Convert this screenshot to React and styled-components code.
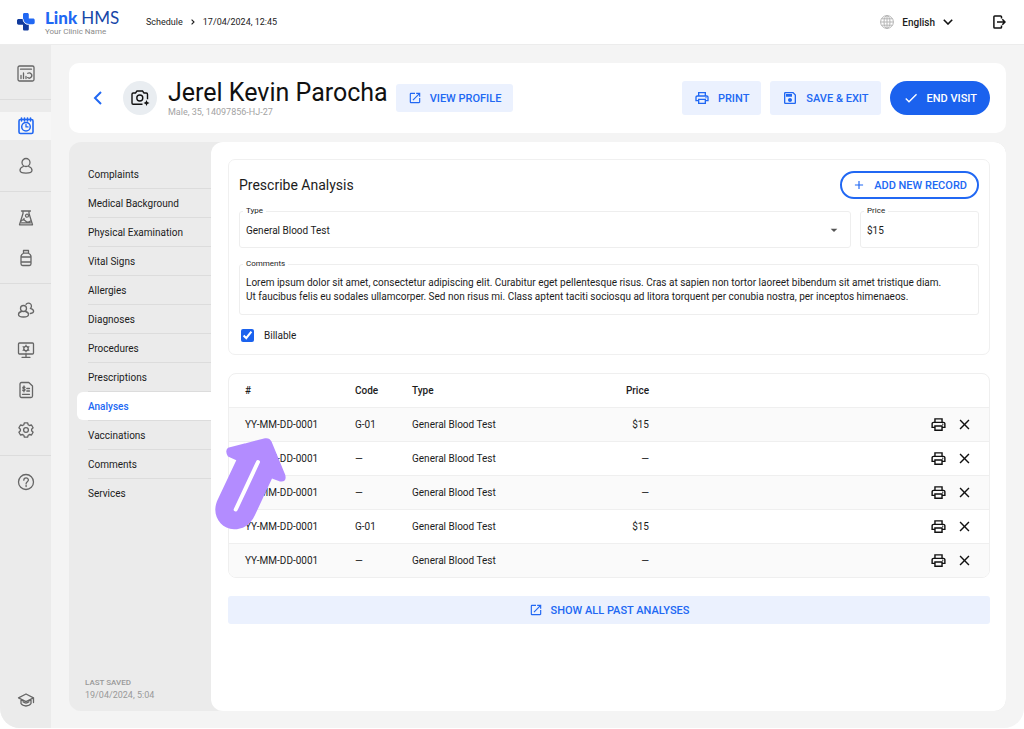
import React, { useState } from "react";
import styled, { createGlobalStyle } from "styled-components";
import { MdOutlinePrint, MdOpenInNew, MdOutlineSave, MdCheck, MdAdd, MdClose, MdArrowDropDown } from "react-icons/md";

const GlobalStyle = createGlobalStyle`
  * {
    box-sizing: border-box;
  }
  body {
    margin: 0;
    background: #fff;
    color: #1c1c1c;
    font-family: Roboto, "Liberation Sans", sans-serif;
    font-size: 10px;
  }
  button, input, select, textarea {
    font: inherit;
    color: inherit;
  }
  button {
    cursor: pointer;
  }
`;

const sections = [
  "Complaints",
  "Medical Background",
  "Physical Examination",
  "Vital Signs",
  "Allergies",
  "Diagnoses",
  "Procedures",
  "Prescriptions",
  "Analyses",
  "Vaccinations",
  "Comments",
  "Services",
];

const records = [
  { id: 1, number: "YY-MM-DD-0001", code: "G-01", type: "General Blood Test", price: "$15" },
  { id: 2, number: "YY-MM-DD-0001", code: "—", type: "General Blood Test", price: "—" },
  { id: 3, number: "YY-MM-DD-0001", code: "—", type: "General Blood Test", price: "—" },
  { id: 4, number: "YY-MM-DD-0001", code: "G-01", type: "General Blood Test", price: "$15" },
  { id: 5, number: "YY-MM-DD-0001", code: "—", type: "General Blood Test", price: "—" },
];

const defaultComment =
  "Lorem ipsum dolor sit amet, consectetur adipiscing elit. Curabitur eget pellentesque risus. Cras at sapien non tortor laoreet bibendum sit amet tristique diam.\nUt faucibus felis eu sodales ullamcorper. Sed non risus mi. Class aptent taciti sociosqu ad litora torquent per conubia nostra, per inceptos himenaeos.";

const icons = {
  dashboard: (
    <>
      <rect x="1" y="1" width="16" height="15" rx="1.5" />
      <path d="M3.5 4.2h11M4 13.5v-3M6.5 13.5V8M9 13.5v-2M10.8 8.300a2.600 2.600 0 1 1-.2 4.300" />
    </>
  ),
  schedule: (
    <>
      <rect x="2" y="2.5" width="14" height="14" rx="1.5" strokeWidth="1.6" />
      <path d="M4.5 1v3M7.5 1v3M10.5 1v3M13.5 1v3" strokeWidth="1.6" />
      <circle cx="9" cy="9.7" r="4.3" strokeWidth="1.5" />
      <path d="M9 7.3v2.6h2" />
    </>
  ),
  patient: (
    <>
      <circle cx="9" cy="5.5" r="4" />
      <path d="M6.300 9.500C4.200 10.300 3 11.800 3 13.300c0 1.900 2.600 2.900 6 2.900s6-1 6-2.900c0-1.500-1.200-3-3.300-3.800" />
    </>
  ),
  lab: (
    <>
      <path d="M4.500 2h9M6 2.200v2.300L2.500 15.800h13L12 4.500V2.200" />
      <circle cx="10" cy="6.700" r="1.500" />
      <path d="M4 12c1.500-1.600 3-1.600 4.500 0s3.500 1.200 5 0M7 9.300v1.500M4.200 13.800h9.500" />
    </>
  ),
  bottle: (
    <>
      <path d="M6.500 1.500h5v2.700h-5zM6.500 4.200C4.800 5.200 4 6 4 7.500v7.300c0 1 .6 1.700 1.600 1.700h6.800c1 0 1.600-.7 1.600-1.700V7.500c0-1.500-.8-2.300-2.500-3.300M4 8h10M4 13h10" />
    </>
  ),
  people: (
    <>
      <circle cx="6.500" cy="7.500" r="3" />
      <path d="M4.500 10.500C2.500 11 1.500 12 1.500 13.500c0 1.500 2 2.500 5 2.500s5-1 5-2.500c0-1.500-1-2.500-3-3M9 3.300a3 3 0 1 1 4.300 4.100c2.200.6 3.300 1.500 3.300 2.900 0 1.200-1.300 2-3.300 2.200" />
    </>
  ),
  monitor: (
    <>
      <rect x="1.500" y="2" width="15" height="11" rx="1" />
      <circle cx="9" cy="7.500" r="2.200" />
      <path d="M9 4.200v1M9 9.800v1M6.100 5.800l.9.500M11 8.700l.9.500M6.100 9.200l.9-.5M11 6.300l.9-.5M9 13v3M5 16.300h8" />
    </>
  ),
  invoice: (
    <>
      <path d="M4.500 1.500h7.300L15.500 5v10c0 .8-.7 1.500-1.500 1.500H4.500C3.700 16.500 3 15.800 3 15V3c0-.8.7-1.500 1.500-1.500z" />
      <path d="M8 6.300c-.4-.7-2.200-.7-2.200.4 0 1.300 2.300.8 2.300 2.100 0 1.100-1.900 1.200-2.400.3M7 5v5.800M9.800 7.500h2.700M9.800 10h2.700M5.500 13.300h7" />
    </>
  ),
  settings: (
    <>
      <path d="M7.400 1.800h3.200l.6 2 1.200.7 2.100-.5 1.600 2.800L14.600 8.300v1.400l1.500 1.500-1.600 2.800-2.100-.5-1.200.7-.6 2H7.400l-.6-2-1.200-.7-2.100.5-1.600-2.800 1.500-1.500V8.300L1.900 6.800 3.500 4l2.100.5 1.200-.7z" />
      <circle cx="9" cy="9" r="2.400" />
    </>
  ),
  help: (
    <>
      <circle cx="9" cy="9" r="7.500" />
      <path d="M6.800 7.200c0-3 4.600-2.900 4.600-.2 0 1.700-2.300 1.700-2.300 3.700M9.100 12.200v1.300" />
    </>
  ),
  academy: (
    <>
      <path d="M1.500 6.800L9 3l7.500 3.800L9 10.600zM4 8.300v4.200C6 15.800 12 15.800 14 12.500V8.300M16.500 6.800v4.700M6 10.800c2 1.700 4 1.700 6 0" />
    </>
  ),
};

const railItems = [
  { name: "dashboard", label: "Dashboard" },
  { divider: true },
  { name: "schedule", label: "Schedule", active: true },
  { name: "patient", label: "Patients" },
  { divider: true },
  { name: "lab", label: "Laboratory" },
  { name: "bottle", label: "Pharmacy" },
  { divider: true },
  { name: "people", label: "Staff" },
  { name: "monitor", label: "Equipment" },
  { name: "invoice", label: "Invoices" },
  { name: "settings", label: "Settings" },
  { divider: true },
  { name: "help", label: "Help" },
];

function RailIcon({ name }) {
  return (
    <svg width="18" height="18" viewBox="0 0 18 18" fill="none" stroke="currentColor" strokeWidth="1.3" strokeLinecap="round" strokeLinejoin="round">
      {icons[name]}
    </svg>
  );
}

function LogoMark() {
  return (
    <svg width="18" height="18" viewBox="0 0 18 18">
      <path d="M7.500 0h2.700c1 0 1.600.6 1.600 1.600V5.600H16c1 0 1.700.6 1.700 1.600v2.400c0 1-.7 1.700-1.700 1.700h-4.200C8.500 11.300 6 9 6 5.800V1.600C6 .6 6.500 0 7.500 0z" fill="#2168f3" />
      <path d="M1.700 6h4.200c.3 3.300 2.500 5.500 5.900 5.600V16c0 1-.6 1.600-1.600 1.600H7.500c-1 0-1.500-.6-1.500-1.600v-4.300H1.700C.7 11.700 0 11.100 0 10.100V7.600C0 6.600.7 6 1.700 6z" fill="#103a9c" />
      <path d="M6 5.800C6 9 8.500 11.400 11.800 11.400" fill="none" stroke="#fff" strokeWidth=".8" />
    </svg>
  );
}

function Header() {
  return (
    <TopBar>
      <Brand href="#home">
        <LogoMark />
        <BrandText>
          <BrandName>
            Link<span>HMS</span>
          </BrandName>
          <BrandSub>Your Clinic Name</BrandSub>
        </BrandText>
      </Brand>
      <Crumbs aria-label="Breadcrumb">
        <a href="#schedule">Schedule</a>
        <svg width="4" height="6" viewBox="0 0 4 6" fill="none" stroke="#1c1c1c" strokeWidth="1.100">
          <path d="M.6.6L3 3 .6 5.400" />
        </svg>
        <span>17/04/2024, 12:45</span>
      </Crumbs>
      <Language>
        <svg width="14" height="14" viewBox="0 0 14 14" fill="none" stroke="#b5b5b5" strokeWidth="1">
          <circle cx="7" cy="7" r="6.400" />
          <ellipse cx="7" cy="7" rx="3" ry="6.400" />
          <path d="M7 .6v12.800M.6 7h12.800M1.500 3.800h11M1.500 10.200h11" />
        </svg>
        English
        <svg width="10" height="6" viewBox="0 0 10 6" fill="none" stroke="#111" strokeWidth="1.600">
          <path d="M.8.8L5 5 9.200.8" />
        </svg>
      </Language>
      <LogoutButton aria-label="Log out">
        <svg width="13" height="14" viewBox="0 0 13 14" fill="none" stroke="#111" strokeWidth="1.500">
          <path d="M8.500 3.500V1.800c0-.6-.3-.9-.9-.9H1.800c-.6 0-.9.3-.9.9v10.400c0 .6.300.9.9.9h5.800c.6 0 .9-.3.9-.9v-1.700M4 7h8M9.300 4.200L12 7 9.300 9.800" />
        </svg>
      </LogoutButton>
    </TopBar>
  );
}

function PatientHeader() {
  return (
    <PatientCard>
      <BackButton aria-label="Back">
        <svg width="10" height="14" viewBox="0 0 10 14" fill="none" stroke="#2168f3" strokeWidth="2">
          <path d="M8 1L2 7l6 6" />
        </svg>
      </BackButton>
      <Avatar aria-label="Add photo">
        <svg width="20" height="18" viewBox="0 0 20 18" fill="none" stroke="#111" strokeWidth="1.400">
          <path d="M12.500 15.300H3.200c-.8 0-1.200-.4-1.200-1.200V5.200C2 4.400 2.400 4 3.200 4h2.300l1.500-2h5.500L14 4h2.300c.8 0 1.200.4 1.200 1.200v5" />
          <circle cx="9.800" cy="9" r="3" />
          <path d="M16.500 11l.9 2.100 2.100.9-2.100.9-.9 2.100-.9-2.100-2.100-.9 2.100-.9z" fill="#111" stroke="none" />
        </svg>
      </Avatar>
      <PatientInfo>
        <PatientName>Jerel Kevin Parocha</PatientName>
        <PatientMeta>Male, 35, 14097856-HJ-27</PatientMeta>
      </PatientInfo>
      <SoftButton>
        <MdOpenInNew size={14} />
        VIEW PROFILE
      </SoftButton>
      <Actions>
        <SoftButton $tall>
          <MdOutlinePrint size={16} />
          PRINT
        </SoftButton>
        <SoftButton $tall>
          <MdOutlineSave size={16} />
          SAVE &amp; EXIT
        </SoftButton>
        <PrimaryButton>
          <MdCheck size={16} />
          END VISIT
        </PrimaryButton>
      </Actions>
    </PatientCard>
  );
}

function AnalysisForm() {
  const [type, setType] = useState("General Blood Test");
  const [price, setPrice] = useState("$15");
  const [comment, setComment] = useState(defaultComment);
  const [billable, setBillable] = useState(true);

  return (
    <FormCard>
      <FormHead>
        <FormTitle>Prescribe Analysis</FormTitle>
        <OutlineButton type="button">
          <MdAdd size={14} />
          ADD NEW RECORD
        </OutlineButton>
      </FormHead>
      <FieldRow>
        <Field>
          <legend><label htmlFor="type">Type</label></legend>
          <SelectWrap>
            <select id="type" value={type} onChange={(e) => setType(e.target.value)}>
              <option>General Blood Test</option>
              <option>Urine Test</option>
            </select>
            <MdArrowDropDown size={16} />
          </SelectWrap>
        </Field>
        <Field $narrow>
          <legend><label htmlFor="price">Price</label></legend>
          <TextInput id="price" value={price} onChange={(e) => setPrice(e.target.value)} />
        </Field>
      </FieldRow>
      <Field>
        <legend><label htmlFor="comments">Comments</label></legend>
        <TextArea id="comments" rows={2} value={comment} onChange={(e) => setComment(e.target.value)} />
      </Field>
      <CheckLabel>
        <Checkbox type="checkbox" checked={billable} onChange={(e) => setBillable(e.target.checked)} />
        Billable
      </CheckLabel>
    </FormCard>
  );
}

function RecordsTable() {
  return (
    <TableCard>
      <Table>
        <colgroup>
          <Col $width={126} />
          <Col $width={57} />
          <Col $width={180} />
          <Col $width={57} />
          <col />
        </colgroup>
        <thead>
          <tr>
            <th>#</th>
            <th>Code</th>
            <th>Type</th>
            <PriceHead>Price</PriceHead>
            <th aria-label="Actions"></th>
          </tr>
        </thead>
        <tbody>
          {records.map((r) => (
            <tr key={r.id}>
              <td>{r.number}</td>
              <td>{r.code}</td>
              <td>{r.type}</td>
              <PriceCell>{r.price}</PriceCell>
              <td>
                <RowActions>
                  <IconButton aria-label="Print record">
                    <MdOutlinePrint size={17} />
                  </IconButton>
                  <IconButton aria-label="Remove record">
                    <MdClose size={17} />
                  </IconButton>
                </RowActions>
              </td>
            </tr>
          ))}
        </tbody>
      </Table>
    </TableCard>
  );
}

function App() {
  const [section, setSection] = useState("Analyses");

  return (
    <Page>
      <GlobalStyle />
      <Header />
      <Body>
        <Rail>
          {railItems.map((item, i) =>
            item.divider ? (
              <RailDivider key={i} />
            ) : (
              <RailLink key={i} href={`#${item.name}`} aria-label={item.label} $active={item.active}>
                <RailIcon name={item.name} />
              </RailLink>
            )
          )}
          <RailBottom href="#academy" aria-label="Academy">
            <RailIcon name="academy" />
          </RailBottom>
        </Rail>
        <Main>
          <PatientHeader />
          <Workspace>
            <SectionNav>
              <SectionList>
                {sections.map((name) => (
                  <li key={name}>
                    <SectionButton $active={name === section} onClick={() => setSection(name)}>
                      {name}
                    </SectionButton>
                  </li>
                ))}
              </SectionList>
              <Saved>
                <SavedTitle>LAST SAVED</SavedTitle>
                <SavedDate>19/04/2024, 5:04</SavedDate>
              </Saved>
            </SectionNav>
            <Content>
              <AnalysisForm />
              <RecordsTable />
              <SoftButton $wide>
                <MdOpenInNew size={14} />
                SHOW ALL PAST ANALYSES
              </SoftButton>
              <Pointer width="72" height="93" viewBox="0 0 72 93" aria-hidden="true">
                <path d="M13 10.700L50 1.300Q54.500.5 56.500 4.500L70.300 38Q72 45.500 65 44.500L57 41.500 40 78C35 89 27 92.300 19 92.300 8 92 0 83 .3 72 .5 68 1.500 65 3 62L21.300 23.300 13 19.500Q9.500 14 13 10.700z" fill="#b38cff" />
                <path d="M43 25L20.700 72.500" stroke="#fff" strokeWidth="4" strokeLinecap="round" />
              </Pointer>
            </Content>
          </Workspace>
        </Main>
      </Body>
    </Page>
  );
}

const Page = styled.div`
  display: flex;
  flex-direction: column;
  min-height: 100vh;
  padding-bottom: 1px;
`;

const TopBar = styled.header`
  display: flex;
  align-items: center;
  height: 45px;
  padding: 0 18px 0 17px;
  border-bottom: 1px solid #ececec;
  background: #fff;
`;

const Brand = styled.a`
  display: flex;
  align-items: center;
  gap: 10px;
  width: 129px;
  text-decoration: none;
`;

const BrandText = styled.span`
  display: flex;
  flex-direction: column;
`;

const BrandName = styled.span`
  color: #2168f3;
  font-family: Lato, sans-serif;
  font-size: 17px;
  font-weight: 900;
  line-height: 18px;
  white-space: nowrap;

  span {
    margin-left: 4px;
    color: #1747a8;
    font-weight: 400;
  }
`;

const BrandSub = styled.span`
  color: #8a8a8a;
  font-size: 8px;
  line-height: 9px;
`;

const Crumbs = styled.nav`
  display: flex;
  align-items: center;
  gap: 8px;
  font-size: 9px;

  a {
    color: inherit;
    text-decoration: none;
  }
`;

const Language = styled.button`
  display: flex;
  align-items: center;
  gap: 8px;
  margin-left: auto;
  padding: 0;
  border: 0;
  background: none;
  font-weight: 500;
`;

const LogoutButton = styled.button`
  display: flex;
  margin-left: 40px;
  padding: 0;
  border: 0;
  background: none;
`;

const Body = styled.div`
  display: flex;
  flex: 1;
  overflow: hidden;
  border-radius: 0 0 20px 20px;
  background: #f4f4f4;
`;

const Rail = styled.nav`
  display: flex;
  flex-direction: column;
  gap: 12px;
  flex: none;
  width: 51px;
  padding: 15px 0 14px;
  background: #ebebeb;
`;

const RailLink = styled.a`
  display: flex;
  align-items: center;
  justify-content: center;
  height: 28px;
  background: ${(p) => (p.$active ? "#f6f6f6" : "transparent")};
  color: ${(p) => (p.$active ? "#2168f3" : "#666")};
`;

const RailBottom = styled(RailLink)`
  margin-top: auto;
`;

const RailDivider = styled.hr`
  width: 100%;
  margin: -1px 0 0;
  border: 0;
  border-top: 1px solid #dcdcdc;
`;

const Main = styled.main`
  display: flex;
  flex: 1;
  flex-direction: column;
  gap: 9px;
  min-width: 0;
  padding: 18px 18px 17px;
`;

const PatientCard = styled.section`
  display: flex;
  align-items: center;
  min-height: 70px;
  padding: 0 16px 0 24px;
  border-radius: 10px;
  background: #fff;
`;

const BackButton = styled.button`
  display: flex;
  padding: 0;
  border: 0;
  background: none;
`;

const Avatar = styled.button`
  display: flex;
  align-items: center;
  justify-content: center;
  width: 34px;
  height: 34px;
  margin: 0 11px 0 20px;
  padding: 0;
  border: 0;
  border-radius: 50%;
  background: #e9edf1;
`;

const PatientInfo = styled.div`
  margin-right: 8px;
`;

const PatientName = styled.h1`
  margin: 0;
  color: #111;
  font-size: 25px;
  font-weight: 400;
  line-height: 28px;
  white-space: nowrap;
`;

const PatientMeta = styled.p`
  margin: 0;
  color: #a3a3a3;
  font-size: 9px;
  line-height: 10px;
`;

const Actions = styled.div`
  display: flex;
  gap: 9px;
  margin-left: auto;
`;

const Button = styled.button`
  display: flex;
  align-items: center;
  justify-content: center;
  gap: 8px;
  height: 28px;
  padding: 0 12px;
  border: 0;
  font-size: 11px;
  font-weight: 500;
  white-space: nowrap;
`;

const SoftButton = styled(Button)`
  width: ${(p) => (p.$wide ? "100%" : "auto")};
  height: ${(p) => (p.$tall ? "34px" : "28px")};
  border-radius: 3px;
  background: #ebf1fe;
  color: #2168f3;
`;

const PrimaryButton = styled(Button)`
  height: 34px;
  padding: 0 13px;
  border-radius: 17px;
  background: #1b62ee;
  color: #fff;
`;

const OutlineButton = styled(Button)`
  padding: 0 10px;
  border: 2px solid #2168f3;
  border-radius: 14px;
  background: #fff;
  color: #2168f3;
`;

const Workspace = styled.div`
  display: flex;
  flex: 1;
  overflow: hidden;
  border-radius: 12px;
  background: #ebebeb;
`;

const SectionNav = styled.nav`
  display: flex;
  flex: none;
  flex-direction: column;
  justify-content: space-between;
  width: 142px;
  padding: 18px 0 10px;
`;

const SectionList = styled.ul`
  margin: 0;
  padding: 0 0 0 19px;
  list-style: none;

  li {
    height: 29px;
    border-bottom: 1px solid #dcdcdc;
  }
  li:last-child {
    border-bottom: 0;
  }
`;

const SectionButton = styled.button`
  display: block;
  width: ${(p) => (p.$active ? "calc(100% + 11px)" : "100%")};
  height: 28px;
  margin-left: ${(p) => (p.$active ? "-11px" : "0")};
  padding: 0 0 0 ${(p) => (p.$active ? "11px" : "0")};
  border: 0;
  border-radius: 6px 0 0 6px;
  background: ${(p) => (p.$active ? "#fff" : "none")};
  color: ${(p) => (p.$active ? "#2168f3" : "inherit")};
  font-weight: ${(p) => (p.$active ? 500 : 400)};
  text-align: left;
`;

const Saved = styled.div`
  padding-left: 16px;
  color: #999;
`;

const SavedTitle = styled.div`
  font-size: 8px;
  font-weight: 500;
  line-height: 12px;
`;

const SavedDate = styled.div`
  font-size: 9px;
  line-height: 12px;
`;

const Content = styled.div`
  position: relative;
  display: flex;
  flex: 1;
  flex-direction: column;
  gap: 18px;
  min-width: 0;
  padding: 17px 16px 17px 17px;
  border-radius: 12px;
  background: #fff;
`;

const FormCard = styled.form`
  display: flex;
  flex-direction: column;
  padding: 11px 10px 12px;
  border: 1px solid #f0f0f0;
  border-radius: 7px;
`;

const FormHead = styled.div`
  display: flex;
  align-items: center;
  justify-content: space-between;
  margin-bottom: 8px;
`;

const FormTitle = styled.h2`
  margin: 0;
  font-size: 14px;
  font-weight: 400;
`;

const FieldRow = styled.div`
  display: flex;
  gap: 9px;
  margin-bottom: 12px;
`;

const Field = styled.fieldset`
  flex: ${(p) => (p.$narrow ? "0 0 119px" : "1")};
  min-width: 0;
  margin: 0;
  padding: 0 6px 5px;
  border: 1px solid #eee;
  border-radius: 3px;

  legend {
    margin: 0 0 3px -3px;
    padding: 0 3px;
    font-size: 8px;
    line-height: 8px;
  }
`;

const SelectWrap = styled.div`
  display: flex;
  align-items: center;
  height: 24px;

  select {
    flex: 1;
    height: 24px;
    margin-right: -16px;
    padding: 0;
    border: 0;
    outline: 0;
    background: none;
    appearance: none;
  }
  svg {
    margin-right: 2px;
    color: #555;
    pointer-events: none;
  }
`;

const TextInput = styled.input`
  display: block;
  width: 100%;
  height: 24px;
  padding: 0;
  border: 0;
  outline: 0;
  background: none;
`;

const TextArea = styled.textarea`
  display: block;
  width: 100%;
  height: 38px;
  padding: 5px 0;
  border: 0;
  outline: 0;
  resize: none;
  overflow: hidden;
  background: none;
  line-height: 14px;
`;

const CheckLabel = styled.label`
  display: flex;
  align-items: center;
  align-self: flex-start;
  gap: 10px;
  margin: 14px 0 0 2px;
`;

const Checkbox = styled.input`
  width: 13px;
  height: 13px;
  margin: 0;
  accent-color: #1b62ee;
`;

const TableCard = styled.div`
  overflow: hidden;
  border: 1px solid #efefef;
  border-radius: 8px;
`;

const Col = styled.col`
  width: ${(p) => p.$width}px;
`;

const Table = styled.table`
  width: 100%;
  border-collapse: collapse;
  table-layout: fixed;

  th, td {
    height: 34px;
    padding: 0;
    text-align: left;
  }
  th {
    height: 33px;
    font-weight: 500;
  }
  th:first-child, td:first-child {
    padding-left: 16px;
  }
  tbody tr {
    border-top: 1px solid #efefef;
  }
  tbody tr:nth-child(odd) {
    background: #fafafa;
  }
`;

const PriceHead = styled.th`
  && {
    text-align: right;
  }
`;

const PriceCell = styled.td`
  && {
    text-align: right;
  }
`;

const RowActions = styled.div`
  display: flex;
  justify-content: flex-end;
  gap: 9px;
  padding-right: 16px;
`;

const IconButton = styled.button`
  display: flex;
  padding: 0;
  border: 0;
  background: none;
  color: #111;
`;

/* arrow that floats over the records */
const Pointer = styled.svg`
  position: absolute;
  top: 295px;
  left: 4px;
  pointer-events: none;
`;

export default App;
